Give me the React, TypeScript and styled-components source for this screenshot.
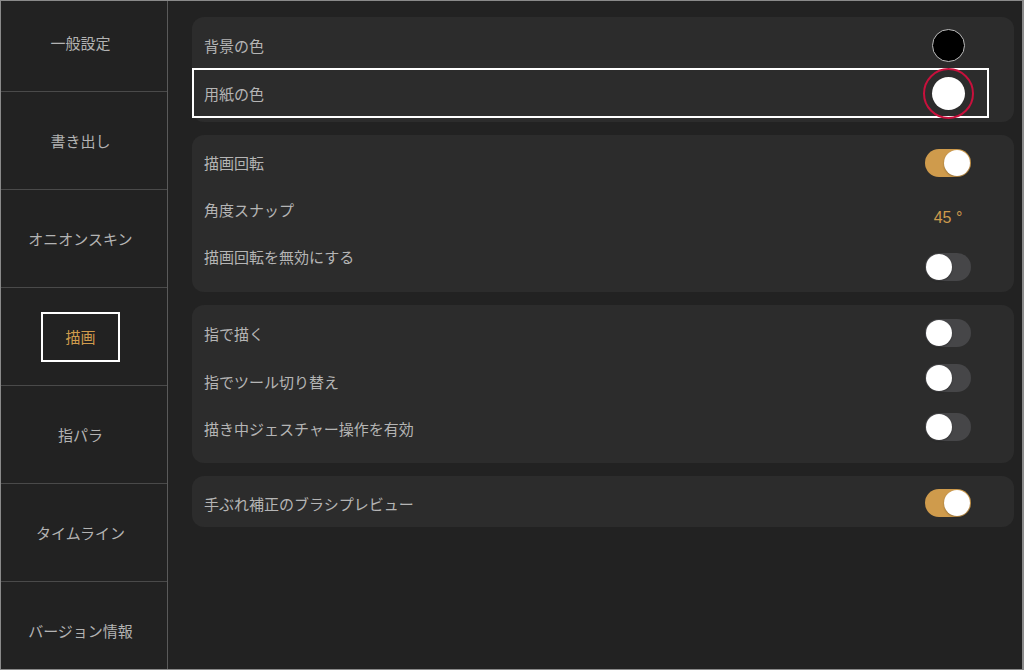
import React from "react";
import styled, { createGlobalStyle } from "styled-components";

const GOLD = "#cf9b4c";

const GlobalStyle = createGlobalStyle`
  html, body {
    margin: 0;
    padding: 0;
    background: #222222;
  }
  * {
    box-sizing: border-box;
  }
`;

const Frame = styled.div`
  width: 1024px;
  height: 670px;
  display: flex;
  background: #222222;
  border: 1px solid #8a8a8a;
  border-right-width: 2px;
  overflow: hidden;
  font-family: "Noto Sans CJK JP", "Noto Sans", sans-serif;
`;

const Sidebar = styled.nav`
  width: 167px;
  flex-shrink: 0;
  border-right: 1px solid #5a5a5a;
  overflow: hidden;
`;

const SideList = styled.div`
  display: flex;
  flex-direction: column;
  margin-top: -7px;
`;

const SideItem = styled.div`
  height: 98px;
  flex-shrink: 0;
  border-bottom: 1px solid #4a4a4a;
  display: flex;
  align-items: center;
  justify-content: center;
  padding-right: 7px;
`;

const SideLabel = styled.span<{ $active?: boolean }>`
  font-size: 15px;
  color: ${(p) => (p.$active ? GOLD : "#b3b3b3")};
  ${(p) =>
    p.$active &&
    `
    width: 79px;
    height: 50px;
    border: 2px solid #ffffff;
    display: flex;
    align-items: center;
    justify-content: center;
  `}
`;

const Main = styled.main`
  flex: 1;
  padding: 16px 8px 0 24px;
  display: flex;
  flex-direction: column;
  gap: 13px;
`;

const Card = styled.section<{ $padBottom?: number }>`
  background: #2c2c2c;
  border-radius: 12px;
  padding: 4px 0 ${(p) => p.$padBottom ?? 4}px;
  display: flex;
  flex-direction: column;
`;

const Row = styled.div<{ $height?: number; $highlight?: boolean }>`
  height: ${(p) => p.$height ?? 48}px;
  display: flex;
  align-items: center;
  justify-content: space-between;
  padding: 0 43px 0 12px;
  ${(p) =>
    p.$highlight &&
    `
    height: 50px;
    margin: -1px 25px -1px 0;
    border: 2px solid #ffffff;
    padding: 0 16px 0 10px;
  `}
`;

const Label = styled.span`
  font-size: 15px;
  color: #b5b5b5;
`;

const Control = styled.div<{ $shift?: number }>`
  width: 46px;
  display: flex;
  justify-content: center;
  align-items: center;
  transform: translateY(${(p) => p.$shift ?? 0}px);
`;

const Swatch = styled.div<{ $color: string; $ring?: boolean }>`
  width: 33px;
  height: 33px;
  border-radius: 50%;
  background: ${(p) => p.$color};
  border: ${(p) => (p.$ring ? "none" : "1.5px solid #bdbdbd")};
  position: relative;
  ${(p) =>
    p.$ring &&
    `
    &::after {
      content: "";
      position: absolute;
      inset: -9px;
      border-radius: 50%;
      border: 2px solid #c8103c;
    }
  `}
`;

const Track = styled.div<{ $on?: boolean }>`
  width: 46px;
  height: 28px;
  border-radius: 14px;
  background: ${(p) => (p.$on ? GOLD : "#464648")};
  display: flex;
  align-items: center;
  justify-content: ${(p) => (p.$on ? "flex-end" : "flex-start")};
  padding: 1px;
`;

const Knob = styled.div`
  width: 26px;
  height: 26px;
  border-radius: 50%;
  background: #ffffff;
  box-shadow: 0 1px 2px rgba(0, 0, 0, 0.3);
`;

const Value = styled.span`
  font-family: "Liberation Sans", "Noto Sans CJK JP", sans-serif;
  font-size: 16px;
  color: ${GOLD};
  white-space: nowrap;
`;

const Toggle = ({ on }: { on?: boolean }) => (
  <Track $on={on}>
    <Knob />
  </Track>
);

const sideItems = [
  "一般設定",
  "書き出し",
  "オニオンスキン",
  "描画",
  "指パラ",
  "タイムライン",
  "バージョン情報",
];

export default function App() {
  return (
    <>
      <GlobalStyle />
      <Frame>
        <Sidebar>
          <SideList>
            {sideItems.map((s) => (
              <SideItem key={s}>
                <SideLabel $active={s === "描画"}>{s}</SideLabel>
              </SideItem>
            ))}
          </SideList>
        </Sidebar>
        <Main>
          <Card $padBottom={5}>
            <Row>
              <Label>背景の色</Label>
              <Control>
                <Swatch $color="#000000" />
              </Control>
            </Row>
            <Row $highlight>
              <Label>用紙の色</Label>
              <Control>
                <Swatch $color="#ffffff" $ring />
              </Control>
            </Row>
          </Card>

          <Card $padBottom={12}>
            <Row $height={47}>
              <Label>描画回転</Label>
              <Control>
                <Toggle on />
              </Control>
            </Row>
            <Row $height={47}>
              <Label>角度スナップ</Label>
              <Control $shift={8}>
                <Value>45 °</Value>
              </Control>
            </Row>
            <Row $height={47}>
              <Label>描画回転を無効にする</Label>
              <Control $shift={10}>
                <Toggle />
              </Control>
            </Row>
          </Card>

          <Card $padBottom={11}>
            <Row>
              <Label>指で描く</Label>
              <Control>
                <Toggle />
              </Control>
            </Row>
            <Row>
              <Label>指でツール切り替え</Label>
              <Control $shift={-3}>
                <Toggle />
              </Control>
            </Row>
            <Row $height={47}>
              <Label>描き中ジェスチャー操作を有効</Label>
              <Control $shift={-2}>
                <Toggle />
              </Control>
            </Row>
          </Card>

          <Card $padBottom={0}>
            <Row $height={47}>
              <Label>手ぶれ補正のブラシプレビュー</Label>
              <Control $shift={-1}>
                <Toggle on />
              </Control>
            </Row>
          </Card>
        </Main>
      </Frame>
    </>
  );
}
